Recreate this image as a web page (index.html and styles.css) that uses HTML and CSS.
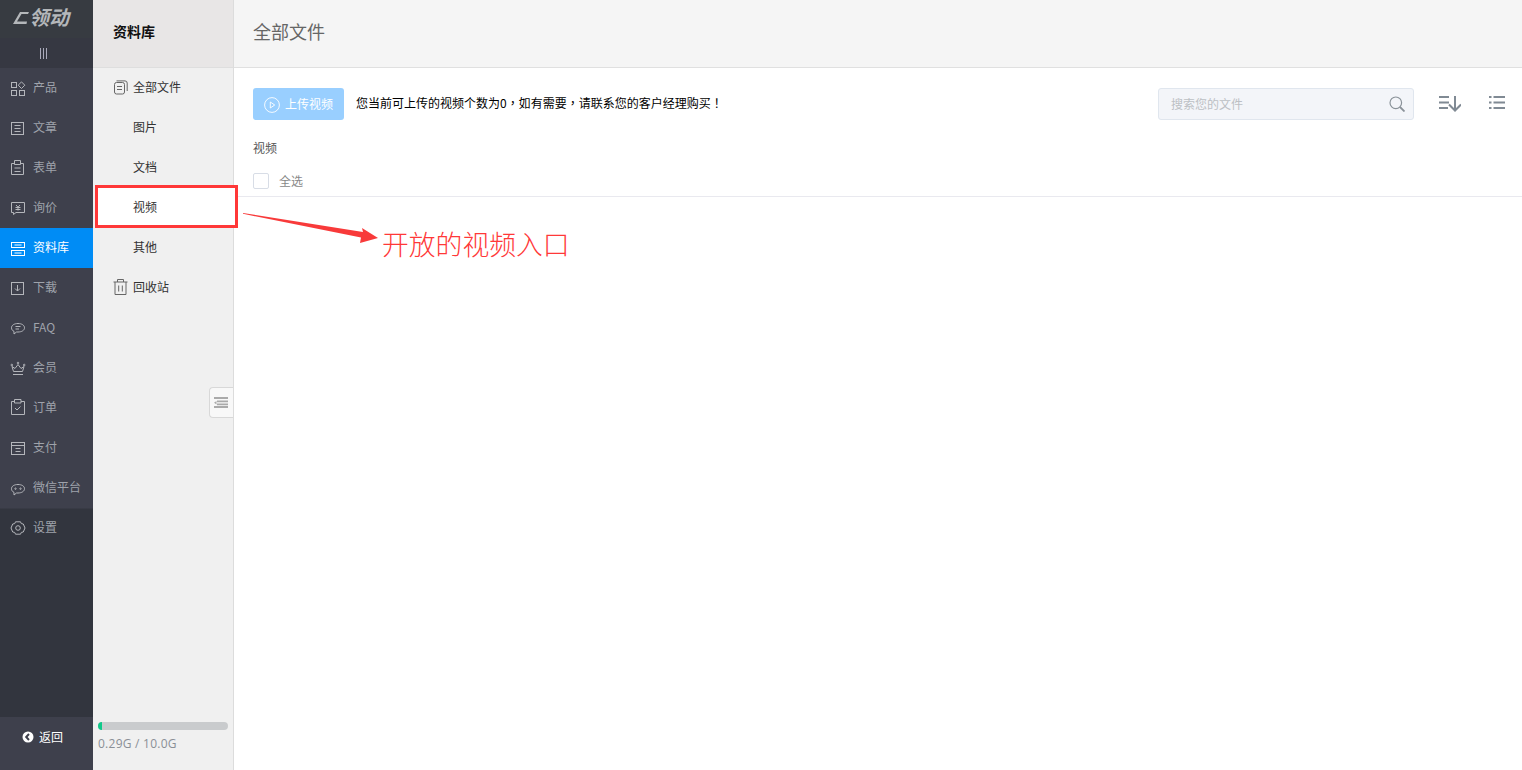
FILE: index.html
```html
<!DOCTYPE html>
<html lang="zh-CN">
<head>
<meta charset="utf-8">
<title>资料库</title>
<link rel="stylesheet" href="styles.css">
</head>
<body>
<div class="app">
  <aside class="rail">
    <div class="logo">
      <svg class="logo-mark" width="16" height="16" viewBox="0 0 16 16"><path d="M0 15 L7 3 H16 L15 5 H8.500 L4 12.500 H14 L13.500 15 Z" fill="#b4b7ba"/></svg>
      <span class="logo-text">领动</span>
    </div>
    <div class="rail-toggle"><span class="bars"></span></div>
    <nav class="rail-nav">
      <a class="rail-item"><svg class="ri" viewBox="0 0 16 16"><rect x="1.500" y="1.500" width="5" height="5"/><path d="M11.500 .9 14.800 4.200 11.500 7.500 8.200 4.200Z"/><rect x="1.500" y="9.500" width="5" height="5"/><rect x="9.500" y="9.500" width="5" height="5"/></svg>产品</a>
      <a class="rail-item"><svg class="ri" viewBox="0 0 16 16"><rect x="1.500" y="1.500" width="12" height="12"/><path d="M4.500 4.500h6M4.500 7.500h6M4.500 10.500h6"/></svg>文章</a>
      <a class="rail-item"><svg class="ri" viewBox="0 0 16 16"><path d="M4.500 2.500H1.500v11h12v-11H11M4.500 -.5h6v4h-6zM4.500 7h6M4.500 10.500h6"/></svg>表单</a>
      <a class="rail-item"><svg class="ri" viewBox="0 0 16 16"><path d="M1.500 1.500h13v10H6l-2.500 2v-2h-2zM6 4l2 2.200L10 4M8 6.200v3.300M5.500 6.500h5M5.500 8.500h5"/></svg>询价</a>
      <a class="rail-item active"><svg class="ri" viewBox="0 0 16 16"><rect x="1.500" y="1.500" width="13" height="5"/><rect x="1.500" y="9.500" width="13" height="5"/><path d="M4.500 4h7M4.500 12h7"/></svg>资料库</a>
      <a class="rail-item"><svg class="ri" viewBox="0 0 16 16"><rect x="1.500" y="1.500" width="12" height="12"/><path d="M7.500 4v6M5 7.500l2.500 2.500L10 7.500"/></svg>下载</a>
      <a class="rail-item"><svg class="ri" viewBox="0 0 16 16"><path d="M8 2.500c3.800 0 6.500 1.800 6.500 4.300S11.800 11 8 11H6.500l-2.500 2v-2.600C2.400 9.700 1.500 8.300 1.500 6.800 1.500 4.300 4.200 2.500 8 2.500ZM5.500 5.500h5M5.500 8h3.500"/></svg>FAQ</a>
      <a class="rail-item"><svg class="ri" viewBox="0 0 16 16"><path d="M3.500 10.500 2 5.500 5 7.500 8 3.500l3 4L14 5.500l-1.500 5ZM3 13.500h10"/><circle cx="8" cy="2" r=".8"/><circle cx="1.800" cy="4" r=".8"/><circle cx="14.200" cy="4" r=".8"/></svg>会员</a>
      <a class="rail-item"><svg class="ri" viewBox="0 0 16 16"><path d="M4.500 .5H1.500v13h13V.5H11M4.500 -1.500h6.500v3.500H4.500zM5 7l2 2 3.500-3.500"/></svg>订单</a>
      <a class="rail-item"><svg class="ri" viewBox="0 0 16 16"><rect x="1.500" y="1.500" width="13" height="12"/><path d="M1.500 4.500h13M5.500 7.500h5M5.500 10.500h5"/></svg>支付</a>
      <a class="rail-item"><svg class="ri" viewBox="0 0 16 16"><path d="M8 3.500c3.800 0 6.500 1.700 6.500 4.200S11.800 12 8 12H6.500L4 14v-2.600C2.400 10.700 1.500 9.200 1.500 7.700 1.500 5.200 4.200 3.500 8 3.500Z"/><circle cx="5.500" cy="7.700" r=".7"/><circle cx="10.500" cy="7.700" r=".7"/></svg>微信平台</a>
      <a class="rail-item settings"><svg class="ri gear" viewBox="0 0 16 16"><path d="M5.500 .8h5l.8 1.800 2 .4L15 7l-1.700 4-2 .4-.8 1.800h-5l-.8-1.800-2-.4L1 7l1.700-4 2-.4Z"/><circle cx="8" cy="7" r="2.300"/></svg>设置</a>
    </nav>
    <a class="rail-back"><svg class="back-ic" viewBox="0 0 12 12"><circle cx="6" cy="6" r="5.500" fill="#fff"/><path d="M7 3 4.200 6 7 9" fill="none" stroke="#3e404c" stroke-width="2"/></svg>返回</a>
  </aside>

  <aside class="lib">
    <div class="lib-head">资料库</div>
    <ul class="lib-list">
      <li class="lib-item has-icon"><svg class="li" viewBox="0 0 15 15"><rect x="1.500" y="2.500" width="10" height="11.500" rx="2"/><path d="M3.500 .9h8.500a2.200 2.200 0 0 1 2.200 2.200V11M4 6.500h5M4 9.500h5"/></svg>全部文件</li>
      <li class="lib-item">图片</li>
      <li class="lib-item">文档</li>
      <li class="lib-item current">视频</li>
      <li class="lib-item">其他</li>
      <li class="lib-item has-icon"><svg class="li trash" viewBox="0 0 15 16"><path d="M.5 3h14M4.500 3V.5h6V3M2 3v12.500h11V3M5.700 6.500v6M9.300 6.500v6"/></svg>回收站</li>
    </ul>
    <div class="collapse"><svg width="14" height="11" viewBox="0 0 14 11"><path d="M0 1h14M3 4.300h11M3 7.300h11M0 10h14" stroke="#aaa" stroke-width="1.800"/><path d="M0 5.700 2.500 4v3.400Z" fill="#aaa"/></svg></div>
    <div class="storage">
      <div class="track"><div class="fill"></div></div>
      <div class="usage">0.29G / 10.0G</div>
    </div>
  </aside>

  <main class="main">
    <header class="main-head">全部文件</header>
    <div class="toolbar">
      <button class="upload"><svg class="play" viewBox="0 0 16 16"><circle cx="8" cy="8" r="7.400"/><path d="M6.300 5v6l4.400-3Z"/></svg>上传视频</button>
      <p class="notice" lang="zh-TW">您当前可上传的视频个数为0，如有需要，请联系您的客户经理购买！</p>
      <div class="search">
        <span class="placeholder">搜索您的文件</span>
        <svg class="search-ic" viewBox="0 0 16 16"><circle cx="6.800" cy="6.800" r="5.800"/><path d="M11 11l4.500 4.500" stroke-width="1.800"/></svg>
      </div>
      <svg class="sort-ic" viewBox="0 0 23 16"><path d="M1 1h10M1 6.500h10M1 12h9M17 0v14.500M11 8.500l6 6 6-6"/></svg>
      <svg class="list-ic" viewBox="0 0 17 16"><path d="M1 1h2.500M5.500 1H17M1 6.500h2.500M5.500 6.500H17M1 12h2.500M5.500 12H17"/></svg>
    </div>
    <div class="section-title">视频</div>
    <div class="select-row">
      <span class="check"></span>
      <span class="select-label">全选</span>
    </div>
  </main>
</div>

<div class="callout-box"></div>
<svg class="callout-arrow" width="140" height="36" viewBox="0 0 140 36"><path d="M0 0 L120 19 L119 15 L135 25 L117 30 L118 24.500 L0 .8 Z" fill="#f83a3a"/></svg>
<div class="callout-text">开放的视频入口</div>
</body>
</html>
```
FILE: styles.css
```css
* { box-sizing: border-box; }
html, body { margin: 0; height: 100%; }
body {
  font-family: "Noto Sans CJK SC", "Liberation Sans", sans-serif;
  font-size: 12px;
  background: #fff;
  overflow: hidden;
  position: relative;
}
.app { display: flex; height: 770px; }

/* rail */
.rail {
  width: 93px;
  flex: none;
  display: flex;
  flex-direction: column;
  background: #3e404c;
}
.logo {
  height: 38px;
  background: #373b41;
  display: flex;
  align-items: center;
  justify-content: center;
  padding: 0 11px 5px 0;
}
.logo-text {
  color: #b4b7ba;
  font-size: 20px;
  font-weight: 700;
  line-height: 18px;
  font-style: italic;
}
.rail-toggle {
  height: 30px;
  background: #363842;
  display: flex;
  align-items: center;
  justify-content: center;
  padding-right: 6px;
}
.bars {
  width: 7px;
  height: 11px;
  border-left: 1px solid #aab;
  border-right: 1px solid #aab;
  background: linear-gradient(#aab, #aab) center / 1px 100% no-repeat;
}
.rail-nav {
  flex: 1;
  display: flex;
  flex-direction: column;
  background: linear-gradient(#3e404c 0, #3e404c 440px, #32353e 441px, #32353e 100%);
}
.rail-item {
  height: 40px;
  display: flex;
  align-items: center;
  padding: 0 0 4px 10px;
  gap: 7px;
  color: #9fa3ab;
  font-size: 12px;
}
.rail-item.active { background: #008cf5; color: #fff; }
.ri {
  width: 16px;
  height: 16px;
  flex: none;
  margin-top: 6px;
  overflow: visible;
  fill: none;
  stroke: #b4b6bb;
  stroke-width: 1;
}
.active .ri { stroke: #fff; }
.rail-back {
  height: 53px;
  display: flex;
  align-items: center;
  gap: 5px;
  color: #fff;
  padding: 0 0 15px 22px;
  background: #3e404c;
}
.back-ic { width: 12px; height: 12px; margin-top: 2px; }

/* library column */
.lib {
  width: 141px;
  flex: none;
  position: relative;
  z-index: 1;
  display: flex;
  flex-direction: column;
  background: #f0f0f0;
  border-right: 1px solid #dcdcdc;
}
.lib-head {
  height: 68px;
  display: flex;
  align-items: center;
  padding: 0 0 6px 20px;
  background: #e8e6e6;
  border-bottom: 1px solid #dedede;
  color: #111;
  font-size: 14px;
  font-weight: 700;
}
.lib-list { list-style: none; margin: 0; padding: 0; flex: 1; }
.lib-item {
  height: 40px;
  display: flex;
  align-items: center;
  padding: 0 0 4px 40px;
  color: #333;
}
.lib-item.has-icon { padding-left: 20px; gap: 5px; }
.lib-item.current { background: #fff; margin: 0 -2px 0 2px; padding-left: 38px; }
.li { width: 15px; height: 15px; flex: none; margin-top: 2px; overflow: visible; fill: none; stroke: #666; stroke-width: 1; }
.li.trash { height: 16px; }
.collapse {
  position: absolute;
  left: 116px;
  top: 387px;
  width: 24px;
  height: 31px;
  background: #f8f8f8;
  border: 1px solid #d8d8d8;
  border-right: 0;
  border-radius: 4px 0 0 4px;
  display: flex;
  align-items: center;
  justify-content: center;
  padding-right: 1px;
}
.storage { padding: 0 5px 18px; height: 48px; }
.track { height: 8px; width: 130px; background: #c9cbcd; border-radius: 4px; overflow: hidden; }
.fill { width: 4px; height: 100%; background: #10c98a; }
.usage { margin-top: 7px; color: #8a8f96; font-size: 12px; line-height: 14px; letter-spacing: .25px; font-family: "Open Sans", "Noto Sans CJK SC", sans-serif; }

/* main */
.main { flex: 1; min-width: 0; display: flex; flex-direction: column; }
.main-head {
  height: 68px;
  flex: none;
  display: flex;
  align-items: center;
  padding: 0 0 5px 19px;
  background: #f5f5f5;
  border-bottom: 1px solid #e0e0e0;
  color: #666;
  font-size: 18px;
}
.toolbar {
  display: flex;
  align-items: center;
  height: 32px;
  margin-top: 20px;
  padding: 0 17px 0 19px;
}
.upload {
  width: 91px;
  height: 32px;
  flex: none;
  display: flex;
  align-items: center;
  justify-content: center;
  gap: 5px;
  border: 0;
  border-radius: 3px;
  padding: 0 0 2px;
  background: #99cfff;
  color: #fff;
  font: inherit;
}
.play { width: 16px; height: 16px; margin-top: 3px; fill: none; stroke: #fff; stroke-width: .9; }
.notice { margin: 0 0 0 12px; color: #000; flex: 1; line-height: 30px; padding-bottom: 2px; font-family: "Noto Sans CJK TC", "Noto Sans CJK SC", sans-serif; }
.search {
  width: 256px;
  height: 32px;
  flex: none;
  display: flex;
  align-items: center;
  justify-content: space-between;
  padding: 0 8px 0 12px;
  background: #f3f5f9;
  border: 1px solid #e0e6ee;
  border-radius: 3px;
}
.placeholder { color: #bcc0c4; margin-bottom: 2px; }
.search-ic { width: 16px; height: 16px; fill: none; stroke: #8a9299; stroke-width: 1.200; }
.sort-ic { width: 23px; height: 16px; margin-left: 24px; fill: none; stroke: #808a94; stroke-width: 2; flex: none; }
.list-ic { width: 17px; height: 16px; margin-left: 27px; fill: none; stroke: #808a94; stroke-width: 2; flex: none; }
.section-title { margin: 19px 0 0 19px; height: 18px; line-height: 18px; color: #555; }
.select-row {
  display: flex;
  align-items: center;
  gap: 10px;
  height: 32px;
  margin-top: 8px;
  padding: 1px 0 0 19px;
  border-bottom: 1px solid #e9e9ef;
}
.check { width: 16px; height: 16px; border: 1px solid #d8dde6; border-radius: 2px; background: #fff; }
.select-label { color: #888; margin-bottom: 2px; }

/* annotations drawn over the page */
.callout-box {
  position: absolute;
  z-index: 2;
  left: 95px;
  top: 185px;
  width: 143px;
  height: 43px;
  border: 3px solid #ff3838;
}
.callout-arrow { position: absolute; z-index: 2; left: 243px; top: 213px; }
.callout-text {
  position: absolute;
  z-index: 2;
  left: 382px;
  top: 226px;
  font-size: 26.800px;
  line-height: 36px;
  color: #ff3838;
  font-weight: 300;
  white-space: nowrap;
}
```
